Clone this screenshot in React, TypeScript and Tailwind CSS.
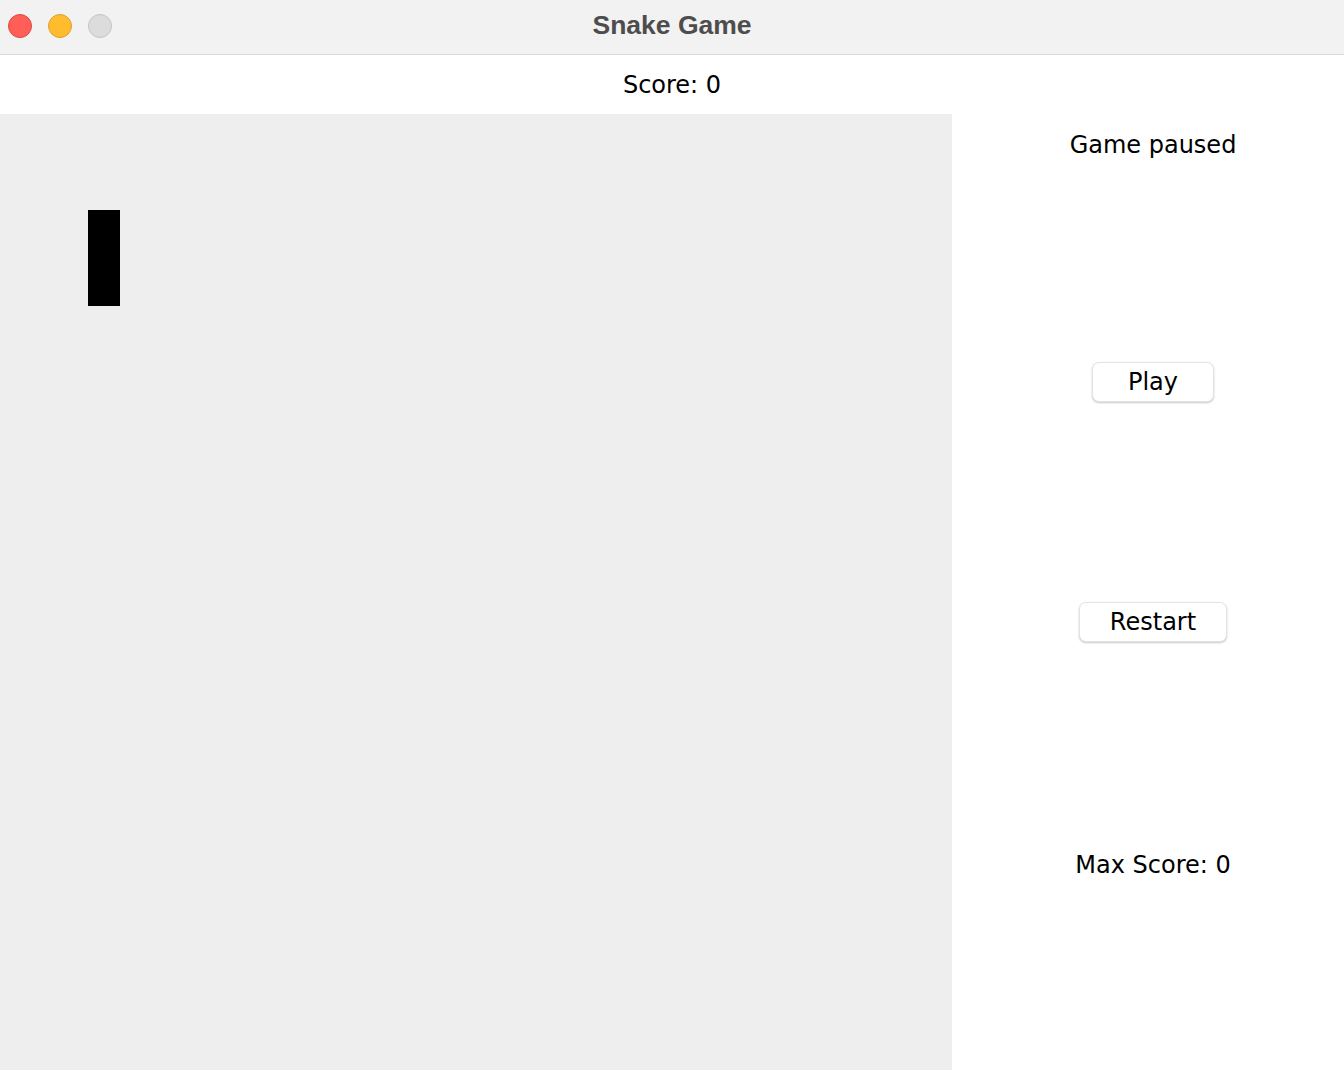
import React from "react";

export default function App() {
  const font = { fontFamily: '"DejaVu Sans", sans-serif' };
  return (
    <div className="w-[1344px] h-[1070px] flex flex-col bg-white overflow-hidden" style={font}>
      {/* Title bar */}
      <div className="relative h-[55px] shrink-0 bg-[#f2f2f2] border-b border-[#d9d9d9] flex items-center justify-center">
        <div className="absolute left-[8px] top-[14px] flex gap-[16px]">
          <div className="w-[24px] h-[24px] rounded-full bg-[#ff5f57] border border-[#e2463f]" />
          <div className="w-[24px] h-[24px] rounded-full bg-[#febc2e] border border-[#e0a12a]" />
          <div className="w-[24px] h-[24px] rounded-full bg-[#dcdcdc] border border-[#c4c4c4]" />
        </div>
        <span
          className="text-[26.5px] font-bold text-[#4d4d4d] leading-none -mt-[3px]"
          style={{ fontFamily: '"Liberation Sans", Arial, sans-serif' }}
        >
          Snake Game
        </span>
      </div>

      {/* Score */}
      <div className="h-[59px] shrink-0 flex items-center justify-center">
        <span className="text-[24px] leading-[28px] text-black">Score: 0</span>
      </div>

      {/* Main */}
      <div className="flex flex-1 min-h-0">
        <div className="relative w-[952px] shrink-0 bg-[#eeeeee]">
          <div className="absolute left-[88px] top-[96px] w-[32px] h-[96px] bg-black" />
        </div>
        <div className="flex-1 flex flex-col items-center pl-[10px]">
          <span className="mt-[17px] text-[24px] leading-[28px] text-black">Game paused</span>
          <button className="mt-[203px] w-[122px] h-[40px] bg-white border border-[#e3e3e3] rounded-[7px] shadow-[0_1px_2px_rgba(0,0,0,0.22)] text-[24px] leading-[28px] text-black flex items-center justify-center">
            Play
          </button>
          <button className="mt-[200px] w-[148px] h-[40px] bg-white border border-[#e3e3e3] rounded-[7px] shadow-[0_1px_2px_rgba(0,0,0,0.22)] text-[24px] leading-[28px] text-black flex items-center justify-center">
            Restart
          </button>
          <span className="mt-[209px] text-[24px] leading-[28px] text-black">Max Score: 0</span>
        </div>
      </div>
    </div>
  );
}
